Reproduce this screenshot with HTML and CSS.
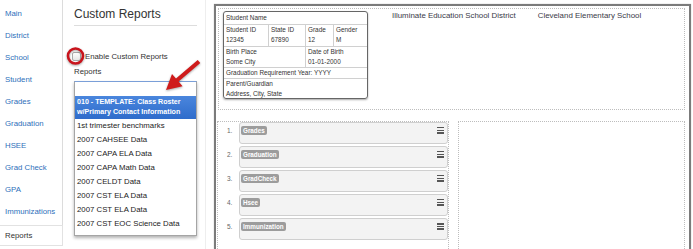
FILE: index.html
```html
<!DOCTYPE html>
<html lang="en">
<head>
    <meta charset="UTF-8">
    <title>Custom Reports</title>
    <link rel="stylesheet" href="styles.css">
</head>
<body>
    <div class="nav">
      <ul>
        <li>Main</li>
        <li>District</li>
        <li>School</li>
        <li>Student</li>
        <li>Grades</li>
        <li>Graduation</li>
        <li>HSEE</li>
        <li>Grad Check</li>
        <li>GPA</li>
        <li>Immunizations</li>
      </ul>
      <div class="nav-current">Reports</div>
    </div>

    <div class="side">
      <h2>Custom Reports</h2>
      <div class="check-row">
        <span class="checkbox"></span>
        <span>Enable Custom Reports</span>
      </div>
      <div class="label">Reports</div>
      <div class="listbox">
        <div class="blank"></div>
        <div class="selected">010 - TEMPLATE: Class Roster<br>w/Primary Contact Information</div>
        <div class="opt">1st trimester benchmarks</div>
        <div class="opt">2007 CAHSEE Data</div>
        <div class="opt">2007 CAPA ELA Data</div>
        <div class="opt">2007 CAPA Math Data</div>
        <div class="opt">2007 CELDT Data</div>
        <div class="opt">2007 CST ELA Data</div>
        <div class="opt">2007 CST ELA Data</div>
        <div class="opt">2007 CST EOC Science Data</div>
      </div>
    </div>

    <div class="main">
      <div class="header-box">
        <div class="card">
          <div class="cell wide">Student Name</div>
          <div class="cell two">Student ID<br>12345</div>
          <div class="cell two">State ID<br>67890</div>
          <div class="cell two">Grade<br>12</div>
          <div class="cell two last">Gender<br>M</div>
          <div class="cell half">Birth Place<br>Some City</div>
          <div class="cell half last">Date of Birth<br>01-01-2000</div>
          <div class="cell wide">Graduation Requirement Year: YYYY</div>
          <div class="cell wide parent">Parent/Guardian<br>Address, City, State</div>
        </div>
        <div class="school">Illuminate Education School District</div>
        <div class="school second">Cleveland Elementary School</div>
      </div>

      <div class="lower">
        <div class="col-left">
          <div class="row"><span class="num">1.</span><div class="item"><span class="badge">Grades</span><span class="grip"></span></div></div>
          <div class="row"><span class="num">2.</span><div class="item"><span class="badge">Graduation</span><span class="grip"></span></div></div>
          <div class="row"><span class="num">3.</span><div class="item"><span class="badge">GradCheck</span><span class="grip"></span></div></div>
          <div class="row"><span class="num">4.</span><div class="item"><span class="badge">Hsee</span><span class="grip"></span></div></div>
          <div class="row"><span class="num">5.</span><div class="item"><span class="badge">Immunization</span><span class="grip"></span></div></div>
        </div>
        <div class="col-right"></div>
      </div>
    </div>

    <!-- annotation marks drawn over the screenshot -->
    <svg class="marks" width="693" height="249" viewBox="0 0 693 249">
      <circle cx="75.5" cy="56" r="7.5" fill="none" stroke="#c9141c" stroke-width="2.6"/>
      <polygon points="166,90 172,74.1 176,78.6 197.7,59.9 200.3,62.9 178.6,81.6 182.6,86.2" fill="#cf1b1b"/>
    </svg>
</body>
</html>
```

FILE: styles.css
```css
body {
    margin: 0;
    height: 249px;
    overflow: hidden;
    display: flex;
    align-items: flex-start;
    background: #fff;
    font-family: "Liberation Sans", Arial, sans-serif;
    color: #333;
    position: relative;
}

/* left navigation */
.nav {
    width: 63px;
    flex: none;
}

.nav ul {
    list-style: none;
    margin: 0;
    padding: 3px 0 2px;
    border-right: 1px solid #dcdcdc;
}

.nav li {
    height: 22px;
    line-height: 22px;
    padding-left: 5px;
    font-size: 7.8px;
    color: #2e6fba;
}

.nav-current {
    height: 19px;
    line-height: 19px;
    padding-left: 5px;
    font-size: 7.8px;
    color: #333;
    border: 1px solid #e2e2e2;
    border-left: none;
}

/* custom reports column */
.side {
    width: 123px;
    flex: none;
    height: 249px;
    padding: 0 8px 0 11px;
    border-right: 1px solid #eee;
}

.side h2 {
    margin: 0;
    padding: 7px 0 4px;
    font-size: 12px;
    line-height: 14px;
    font-weight: normal;
    color: #333;
    border-bottom: 1px solid #ddd;
}

.check-row {
    margin-top: 24px;
    height: 12px;
    display: flex;
    align-items: center;
    gap: 4px;
    font-size: 7.8px;
    margin-left: -2px;
}

.checkbox {
    width: 7px;
    height: 7px;
    border: 1px solid #aaa;
    border-radius: 2px;
    background: linear-gradient(#fff, #e6e6e6);
}

.label {
    margin-top: 5px;
    height: 10px;
    line-height: 10px;
    font-size: 7.8px;
}

.listbox {
    margin-top: 4px;
    border: 1px solid #a5a5a5;
    border-top-color: #7a9fd8;
    padding-bottom: 4px;
    box-shadow: 0 2px 3px rgba(0, 0, 0, 0.3);
    font-size: 7.8px;
    color: #222;
}

.blank {
    height: 14px;
}

.selected {
    height: 23px;
    padding: 1px 2px 0;
    box-sizing: border-box;
    line-height: 10px;
    background: linear-gradient(#4a86dd, #2f6ccb);
    color: #fff;
    font-weight: bold;
    font-size: 7.1px;
    white-space: nowrap;
}

.opt {
    height: 14px;
    line-height: 14px;
    padding-left: 2px;
    white-space: nowrap;
}

/* report layout area */
.main {
    width: 477px;
    flex: none;
    margin: 4px 0 0 8px;
    height: 245px;
    overflow: hidden;
    border: 2px solid #7b7b7b;
    border-bottom: none;
    box-shadow: 0 0 1px rgba(0, 0, 0, 0.3);
    padding: 2px 4px 0 1px;
    box-sizing: border-box;
}

.header-box {
    margin-left: 1px;
    height: 102px;
    box-sizing: border-box;
    border: 1px dotted #bdbdbd;
    padding: 2px 0 0 4px;
    display: flex;
    align-items: flex-start;
}

.card {
    width: 145px;
    flex: none;
    box-sizing: border-box;
    border: 1px solid #666;
    border-radius: 3px;
    box-shadow: 0 1px 2px rgba(0, 0, 0, 0.35);
    display: grid;
    grid-template-columns: 45px 37px 28px 1fr;
    font-size: 6.4px;
    line-height: 10px;
    color: #333;
    overflow: hidden;
}

.cell {
    padding-left: 2px;
    border-top: 1px solid #d0d0d0;
    border-right: 1px solid #d0d0d0;
    white-space: nowrap;
}

.cell.last {
    border-right: none;
}

.wide {
    grid-column: span 4;
    border-right: none;
}

.card .wide:first-child {
    border-top: none;
    padding-top: 1px;
    padding-bottom: 1px;
}

.two {
    padding-bottom: 1px;
}

.half {
    grid-column: span 2;
}

.parent {
    line-height: 9.5px;
}

.school {
    margin-left: 24px;
    font-size: 7.9px;
    line-height: 10px;
    color: #3a3a48;
    white-space: nowrap;
}

.school.second {
    margin-left: 22px;
}

.lower {
    margin-top: 11px;
    display: flex;
    gap: 9px;
}

.col-left {
    width: 232px;
    height: 140px;
    box-sizing: border-box;
    border: 1px dotted #bdbdbd;
    display: flex;
    flex-direction: column;
    gap: 2px;
}

.col-right {
    flex: 1;
    height: 140px;
    border: 1px dotted #bdbdbd;
}

.row {
    display: flex;
}

.num {
    width: 21px;
    flex: none;
    box-sizing: border-box;
    padding: 4px 0 0 9px;
    font-size: 6.5px;
    line-height: 9px;
    color: #666;
}

.item {
    flex: 1;
    height: 22px;
    box-sizing: border-box;
    border: 1px solid #cfcfcf;
    border-radius: 3px;
    background: #f3f3f3;
    display: flex;
    align-items: flex-start;
    justify-content: space-between;
}

.badge {
    margin: 3px 0 0 1px;
    height: 9px;
    line-height: 9px;
    padding: 0 2px;
    border-radius: 2px;
    background: #9c9c9c;
    color: #fff;
    font-size: 6.3px;
    font-weight: bold;
}

.grip {
    width: 7px;
    height: 7px;
    margin: 4px 3px 0 0;
    background: repeating-linear-gradient(#555 0 1.5px, transparent 1.5px 2.6px);
}

.marks {
    position: absolute;
    left: 0;
    top: 0;
    pointer-events: none;
    filter: drop-shadow(0 1px 1px rgba(0, 0, 0, 0.35));
}
```
